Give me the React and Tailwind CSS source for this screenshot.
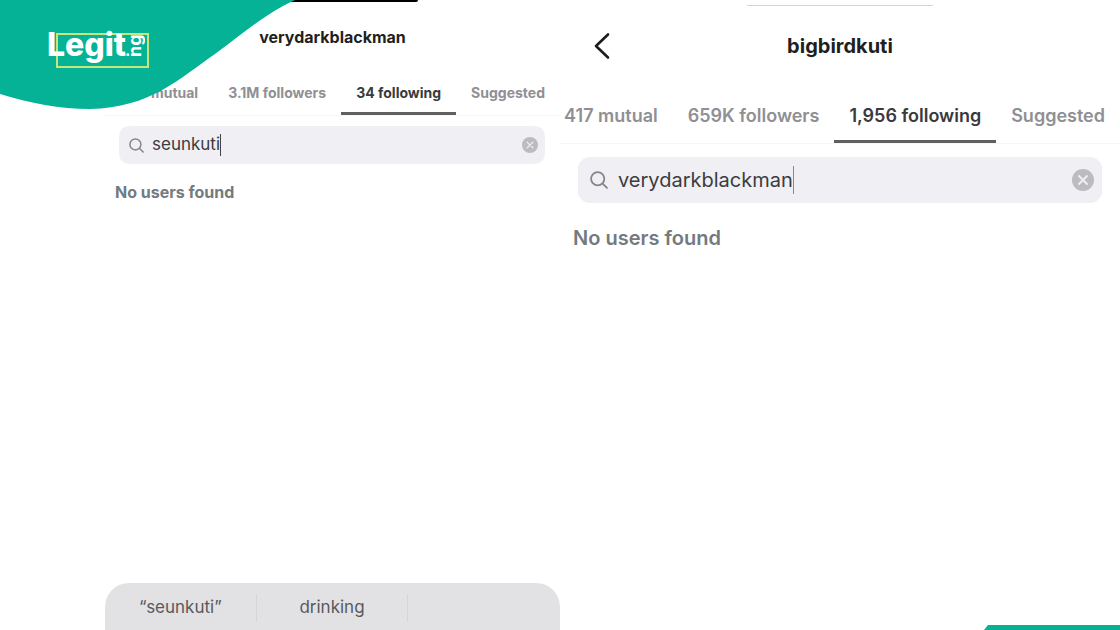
import React, { useState } from "react";

const sizes = {
  small: {
    header: "h-[74px]",
    title: "text-[16px] font-bold",
    tab: "h-[41px] px-[15px] text-[14px] font-bold",
    body: "pl-[10px] pr-[15px]",
    search: "ml-1 mt-[10px] h-[38px] rounded-[10px] pl-[10px] pr-[7px] gap-2",
    icon: "size-[15px]",
    input: "text-[17px]",
    caret: "h-[22px] bg-[#444446]",
    clear: "size-4",
    empty: "mt-4 text-[16px] font-bold",
  },
  large: {
    header: "h-[92px]",
    title: "text-[20px] font-bold",
    tab: "h-[51px] px-[15px] text-[18px] font-semibold",
    body: "pl-[13px] pr-[18px]",
    search: "ml-[5px] mt-[13px] h-[46px] rounded-xl pl-3 pr-2 gap-[10px]",
    icon: "size-[18px]",
    input: "text-[20px]",
    caret: "h-[28px] bg-[#8a8a8e]",
    clear: "size-[22px]",
    empty: "mt-5 text-[20px] font-semibold",
  },
};

function SearchIcon({ className }) {
  return (
    <svg viewBox="0 0 18 18" fill="none" stroke="#85858a" strokeWidth="1.8" strokeLinecap="round" className={className} aria-hidden="true">
      <circle cx="7.7" cy="7.7" r="6.6" />
      <path d="M12.6 12.6 17 16.8" />
    </svg>
  );
}

function ClearIcon({ className }) {
  return (
    <svg viewBox="0 0 22 22" className={className} aria-hidden="true">
      <circle cx="11" cy="11" r="11" fill="#bcbcc0" />
      <path d="m7 7 8 8m0-8-8 8" stroke="#f1f1f5" strokeWidth="1.8" strokeLinecap="round" />
    </svg>
  );
}

function Tabs({ tabs, initial, size }) {
  const [active, setActive] = useState(initial);
  return (
    <div role="tablist" className="flex justify-end overflow-hidden border-b border-[#f6f6f6]">
      {tabs.map((tab) => (
        <button
          key={tab}
          type="button"
          role="tab"
          aria-selected={tab === active}
          onClick={() => setActive(tab)}
          className={
            "shrink-0 whitespace-nowrap border-b-[3px] pb-[2px] " +
            size.tab +
            (tab === active ? " border-[#606060] text-[#3a3a3c]" : " border-transparent text-[#8f8f94]")
          }
        >
          {tab}
        </button>
      ))}
    </div>
  );
}

function Search({ id, initial, size }) {
  const [query, setQuery] = useState(initial);
  return (
    <div className={"flex items-center bg-[#efeff4] " + size.search}>
      <label htmlFor={id} aria-label="Search users">
        <SearchIcon className={size.icon} />
      </label>
      <div className="flex min-w-0 flex-1 items-center">
        <input
          id={id}
          type="text"
          value={query}
          onChange={(e) => setQuery(e.target.value)}
          className={"field-sizing-content min-w-0 bg-transparent text-[#3c3c40] caret-transparent outline-none " + size.input}
        />
        <span className={"w-px " + size.caret} />
      </div>
      <button type="button" aria-label="Clear search" onClick={() => setQuery("")}>
        <ClearIcon className={size.clear} />
      </button>
    </div>
  );
}

function Profile({ id, name, tabs, active, query, size, back }) {
  return (
    <>
      <header className={"grid grid-cols-[1fr_auto_1fr] items-center " + size.header}>
        {back ? (
          <button type="button" aria-label="Back" className="ml-8 w-5">
            <svg viewBox="0 0 20 28" fill="none" stroke="#1c1c1c" strokeWidth="2.6" strokeLinecap="round" strokeLinejoin="round" className="h-7 w-5" aria-hidden="true">
              <path d="M16 2.5 4 14l12 11.5" />
            </svg>
          </button>
        ) : (
          <span />
        )}
        <h1 className={"text-[#1f1f1f] " + size.title}>{name}</h1>
      </header>
      <Tabs tabs={tabs} initial={active} size={size} />
      <div className={size.body}>
        <Search id={id} initial={query} size={size} />
        <p className={"text-[#737a80] " + size.empty}>No users found</p>
      </div>
    </>
  );
}

function Brand() {
  return (
    <div className="absolute left-0 top-0">
      <svg width="296" height="110" viewBox="0 0 296 110" aria-hidden="true">
        <path d="M0 94C30 103 60 109 90 109 150 108 180 78 215 54 245 32 265 14 295 0H0Z" fill="#05b295" />
      </svg>
      <a href="#" className="absolute left-[47px] top-[27px] flex text-white">
        <span className="absolute left-[9px] top-[6px] h-[35px] w-[93px] border-2 border-[#c5e67c]" />
        <span className="relative text-[32px] font-extrabold leading-9">Legit</span>
        <span className="relative -ml-px text-[16px] font-bold leading-[46px]">.</span>
        <span className="relative -ml-1 mt-[8px] h-[22px] rotate-180 text-[18px] font-bold leading-[18px] [writing-mode:vertical-rl]">ng</span>
      </a>
    </div>
  );
}

export default function App() {
  return (
    <main className="relative grid min-h-screen grid-cols-2 overflow-hidden bg-white font-['Inter','Liberation_Sans',sans-serif]">
      <section className="relative flex min-w-0 flex-col pl-[105px]">
        <div className="absolute left-[280px] top-0 h-[2px] w-[138px] rounded-br-full bg-black" />
        <Profile
          id="search-left"
          name="verydarkblackman"
          tabs={["mutual", "3.1M followers", "34 following", "Suggested"]}
          active="34 following"
          query="seunkuti"
          size={sizes.small}
        />
        <div className="mt-auto grid h-[47px] grid-cols-3 items-center rounded-t-[24px] bg-[#e2e2e4] pt-[2px] text-[17px] text-[#59595b]">
          <button type="button" className="h-7 border-r border-[#d6d6d8]">“seunkuti”</button>
          <button type="button" className="h-7 border-r border-[#d6d6d8]">drinking</button>
        </div>
      </section>
      <section className="relative min-w-0">
        <div className="absolute left-1/3 top-[5px] h-px w-1/3 bg-[#d4d4d4]" />
        <Profile
          id="search-right"
          name="bigbirdkuti"
          tabs={["417 mutual", "659K followers", "1,956 following", "Suggested"]}
          active="1,956 following"
          query="verydarkblackman"
          size={sizes.large}
          back
        />
      </section>
      <Brand />
      <svg width="136" height="5" viewBox="0 0 136 5" className="absolute bottom-0 right-0" aria-hidden="true">
        <path d="M0 5 4 0H136V5Z" fill="#05b295" />
      </svg>
    </main>
  );
}
